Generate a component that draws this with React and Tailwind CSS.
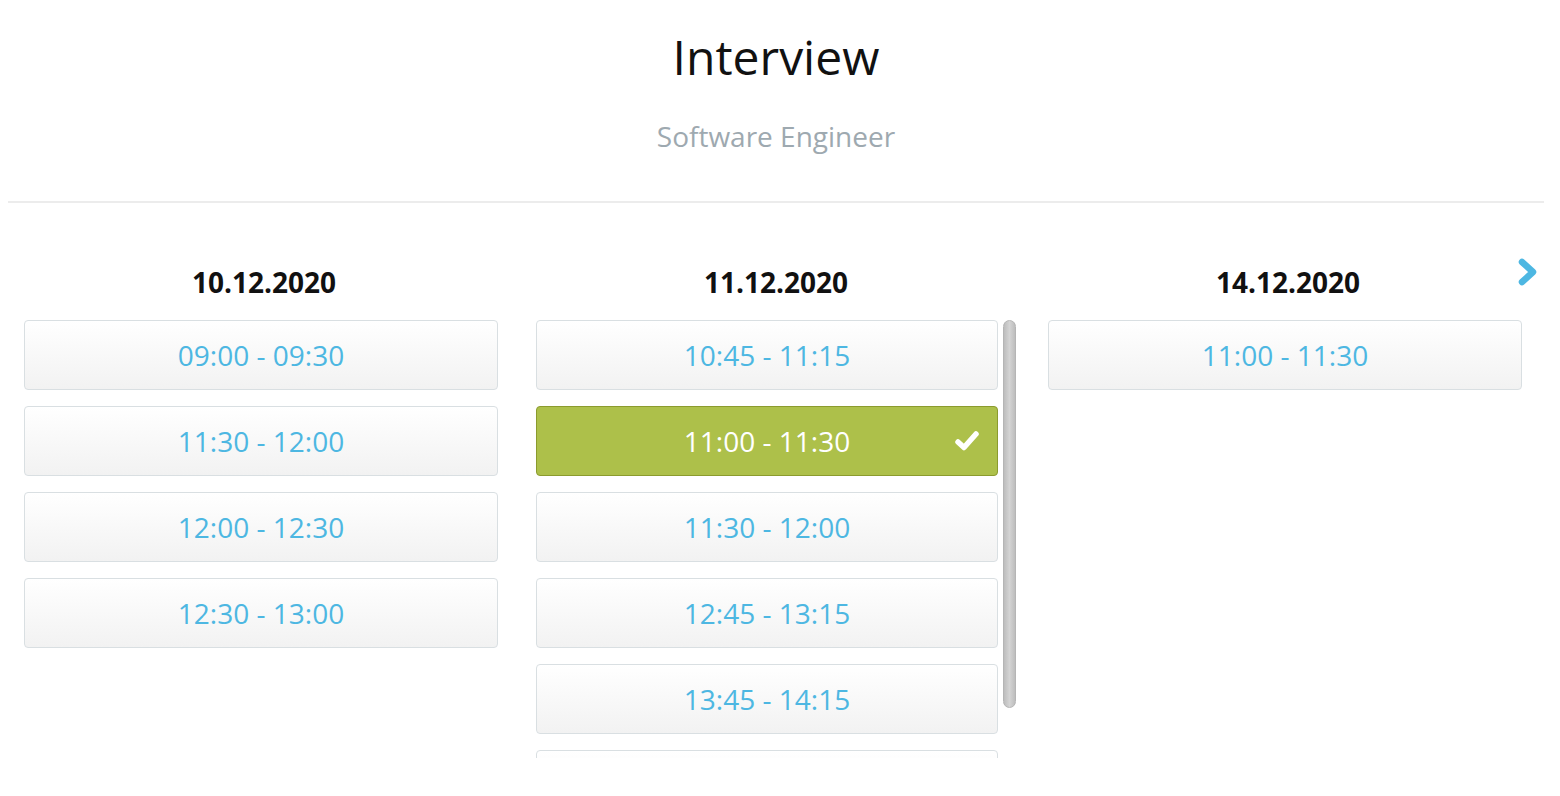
import React from "react";

const font = { fontFamily: '"Open Sans", "Noto Sans", sans-serif' };

function Check() {
  return (
    <svg width="26" height="22" viewBox="0 0 26 22" className="absolute right-[17px] top-[22px]">
      <polyline points="4,13 10,18.5 22,5" fill="none" stroke="#ffffff" strokeWidth="5.5" strokeLinecap="round" strokeLinejoin="round" />
    </svg>
  );
}

function Chevron() {
  return (
    <svg width="24" height="32" viewBox="0 0 24 32" className="absolute right-[4px] top-[53px]">
      <polyline points="6,6 17,16 6,26" fill="none" stroke="#4db7e2" strokeWidth="6.5" strokeLinecap="round" strokeLinejoin="round" />
    </svg>
  );
}

function Slot({ label, selected }) {
  if (selected) {
    return (
      <div className="relative shrink-0 h-[70px] flex items-center justify-center rounded-[4px] border border-[#8b9b2e] bg-[#adc04a] text-white text-[28px]">
        {label}
        <Check />
      </div>
    );
  }
  return (
    <div className="shrink-0 h-[70px] flex items-center justify-center rounded-[4px] border border-[#d9dfe2] bg-gradient-to-b from-white to-[#f2f2f2] text-[#4db7e2] text-[28px]">
      {label}
    </div>
  );
}

function DateHeader({ children }) {
  return (
    <div className="h-[36px] leading-[36px] text-center text-[28px] font-bold text-[#111] mb-[20px]">
      {children}
    </div>
  );
}

export default function App() {
  const col1 = ["09:00 - 09:30", "11:30 - 12:00", "12:00 - 12:30", "12:30 - 13:00"];
  const col2 = ["10:45 - 11:15", "11:00 - 11:30", "11:30 - 12:00", "12:45 - 13:15", "13:45 - 14:15"];
  const col3 = ["11:00 - 11:30"];
  return (
    <div className="w-[1560px] h-[796px] bg-white overflow-hidden" style={font}>
      <div className="w-[1552px] px-[8px]">
        <div className="pt-[25px] text-center text-[48px] leading-[64px] text-[#111]">Interview</div>
        <div className="mt-[29px] text-center text-[28px] leading-[36px] text-[#9ea9b0]">Software Engineer</div>
        <div className="mt-[47px] h-[2px] bg-[#ececec]" />
        <div className="relative px-[16px] pt-[61px]">
          <Chevron />
          <div className="flex gap-[32px]">
            <div className="w-[480px]">
              <DateHeader>10.12.2020</DateHeader>
              <div className="w-[474px] flex flex-col gap-[16px]">
                {col1.map((t) => (
                  <Slot key={t} label={t} />
                ))}
              </div>
            </div>
            <div className="w-[480px]">
              <DateHeader>11.12.2020</DateHeader>
              <div className="flex gap-[5px] h-[438px] overflow-hidden">
                <div className="w-[462px] flex flex-col gap-[16px] shrink-0">
                  {col2.map((t, i) => (
                    <Slot key={t} label={t} selected={i === 1} />
                  ))}
                  <div className="shrink-0 h-[70px] rounded-[4px] border border-[#d9dfe2] bg-gradient-to-b from-white to-[#f2f2f2]" />
                </div>
                <div className="w-[13px] shrink-0">
                  <div className="h-[388px] rounded-full bg-gradient-to-r from-[#bdbdbd] via-[#d4d4d4] to-[#bdbdbd] border border-[#b5b5b5]" />
                </div>
              </div>
            </div>
            <div className="w-[480px]">
              <DateHeader>14.12.2020</DateHeader>
              <div className="w-[474px] flex flex-col gap-[16px]">
                {col3.map((t) => (
                  <Slot key={t} label={t} />
                ))}
              </div>
            </div>
          </div>
        </div>
      </div>
    </div>
  );
}
